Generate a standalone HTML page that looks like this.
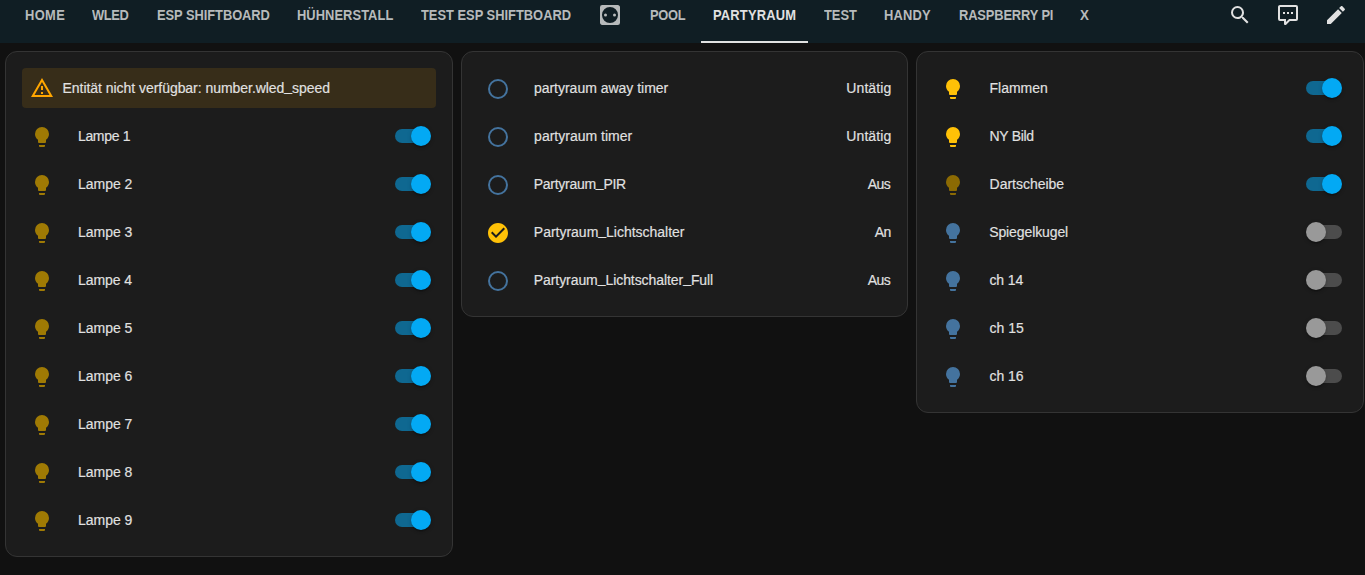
<!DOCTYPE html>
<html lang="de"><head><meta charset="utf-8"><title>Partyraum</title>
<style>
html,body{margin:0;padding:0;background:#111111;}
body{width:1365px;height:575px;position:relative;overflow:hidden;font-family:"Liberation Sans",sans-serif;color:#e1e1e1;-webkit-font-smoothing:antialiased;}
.hdr{position:absolute;left:0;top:0;width:1365px;height:43px;background:#101e24;}
.t{position:absolute;display:block;white-space:nowrap;font-size:14px;line-height:20px;height:20px;}
.b{-webkit-text-stroke:0.15px #e1e1e1;}
.u{position:relative;top:-2px;}
.tab{font-weight:700;font-size:14px;color:#b7babb;transform-origin:0 50%;}
.tab.sel{color:#e1e1e1;}
.bar{position:absolute;left:701px;top:41px;width:107px;height:2px;background:#e1e1e1;}
.card{position:absolute;box-sizing:border-box;background:#1c1c1c;border:1px solid #343434;border-radius:12px;}
.alert{position:absolute;left:22px;top:68px;width:414px;height:40px;border-radius:4px;background:#372d19;}
.ic{position:absolute;display:block;}
.trk{position:absolute;width:32px;height:14px;border-radius:7px;background:#4c4c4c;}
.trk.on{background:#0f6891;}
.thb{position:absolute;width:20px;height:20px;border-radius:50%;background:#999999;box-shadow:0 3px 1px -2px rgba(0,0,0,.2),0 2px 2px 0 rgba(0,0,0,.14),0 1px 5px 0 rgba(0,0,0,.12);}
.thb.on{background:#03a9f4;}
</style></head><body>

<header>
<div class="hdr"></div>
<nav>
<a class="t tab" id="t0" style="left:25.36px;top:5px;letter-spacing:0.398px;transform:scaleX(0.92)">HOME</a>
<a class="t tab" id="t1" style="left:92.43px;top:5px;letter-spacing:-0.443px;transform:scaleX(0.92)">WLED</a>
<a class="t tab" id="t2" style="left:157.23px;top:5px;letter-spacing:-0.054px;transform:scaleX(0.92)">ESP SHIFTBOARD</a>
<a class="t tab" id="t3" style="left:296.87px;top:5px;letter-spacing:0.069px;transform:scaleX(0.92)">HÜHNERSTALL</a>
<a class="t tab" id="t4" style="left:421.15px;top:5px;letter-spacing:0.000px;transform:scaleX(0.92)">TEST ESP SHIFTBOARD</a>
<svg class="ic" style="left:598px;top:3px" width="24" height="24" viewBox="0 0 24 24"><path fill="#b7babb" d="M4.22,2A2.22,2.22 0 0,0 2,4.22V19.78C2,21 3,22 4.22,22H19.78A2.22,2.22 0 0,0 22,19.78V4.22C22,3 21,2 19.78,2H4.22M12,4A8,8 0 0,1 20,12A8,8 0 0,1 12,20A8,8 0 0,1 4,12A8,8 0 0,1 12,4M7.5,10.5A1.5,1.5 0 0,0 6,12A1.5,1.5 0 0,0 7.5,13.5A1.5,1.5 0 0,0 9,12A1.5,1.5 0 0,0 7.5,10.5M16.5,10.5A1.5,1.5 0 0,0 15,12A1.5,1.5 0 0,0 16.5,13.5A1.5,1.5 0 0,0 18,12A1.5,1.5 0 0,0 16.5,10.5Z"/></svg>
<a class="t tab" id="t5" style="left:649.57px;top:5px;letter-spacing:-0.343px;transform:scaleX(0.92)">POOL</a>
<a class="t tab sel" id="t6" style="left:712.69px;top:5px;letter-spacing:0.223px;transform:scaleX(0.92)">PARTYRAUM</a>
<a class="t tab" id="t7" style="left:824.05px;top:5px;letter-spacing:0.000px;transform:scaleX(0.92)">TEST</a>
<a class="t tab" id="t8" style="left:884.05px;top:5px;letter-spacing:0.182px;transform:scaleX(0.92)">HANDY</a>
<a class="t tab" id="t9" style="left:958.62px;top:5px;letter-spacing:-0.146px;transform:scaleX(0.92)">RASPBERRY PI</a>
<a class="t tab" id="t10" style="left:1079.80px;top:5px;letter-spacing:0.000px;transform:scaleX(0.95)">X</a>
<div class="bar"></div>
</nav>
<svg class="ic" style="left:1228px;top:3px" width="24" height="24" viewBox="0 0 24 24"><path fill="#e1e1e1" d="M9.5,3A6.5,6.5 0 0,1 16,9.5C16,11.11 15.41,12.59 14.44,13.73L14.71,14H15.5L20.5,19L19,20.5L14,15.5V14.71L13.73,14.44C12.59,15.41 11.11,16 9.5,16A6.5,6.5 0 0,1 3,9.5A6.5,6.5 0 0,1 9.5,3M9.5,5C7,5 5,7 5,9.5C5,12 7,14 9.5,14C12,14 14,12 14,9.5C14,7 12,5 9.5,5Z"/></svg>
<svg class="ic" style="left:1276px;top:3px" width="24" height="24" viewBox="0 0 24 24"><path fill="#e1e1e1" d="M9,22A1,1 0 0,1 8,21V18H4A2,2 0 0,1 2,16V4C2,2.89 2.9,2 4,2H20A2,2 0 0,1 22,4V16A2,2 0 0,1 20,18H13.9L10.2,21.71C10,21.9 9.75,22 9.5,22V22H9M10,16V19.08L13.08,16H20V4H4V16H10M17,11H15V9H17V11M13,11H11V9H13V11M9,11H7V9H9V11Z"/></svg>
<svg class="ic" style="left:1324px;top:3px" width="24" height="24" viewBox="0 0 24 24"><path fill="#e1e1e1" d="M20.71,7.04C21.1,6.65 21.1,6 20.71,5.63L18.37,3.29C18,2.9 17.35,2.9 16.96,3.29L15.12,5.12L18.87,8.87M3,17.25V21H6.75L17.81,9.93L14.06,6.18L3,17.25Z"/></svg>
</header>
<main>
<section>
<div class="card" style="left:5px;top:51px;width:448px;height:506px"></div>
<div class="alert"></div>
<svg class="ic" style="left:30px;top:76.4px" width="24" height="24" viewBox="0 0 24 24"><path fill="#ffa600" d="M12,2L1,21H23M12,6L19.53,19H4.47M11,10V14H13V10M11,16V18H13V16"/></svg>
<span class="t b" id="t11" style="left:62.52px;top:78px;letter-spacing:-0.042px">Entität nicht verfügbar: number.wled<span class="u">_</span>speed</span>
<div class="row">
<svg class="ic" style="left:30px;top:124.8px" width="24" height="24" viewBox="0 0 24 24"><path fill="#9f7a04" d="M12,2A7,7 0 0,0 5,9C5,11.38 6.19,13.47 8,14.74V17A1,1 0 0,0 9,18H15A1,1 0 0,0 16,17V14.74C17.81,13.47 19,11.38 19,9A7,7 0 0,0 12,2M9,21A1,1 0 0,0 10,22H14A1,1 0 0,0 15,21V20H9V21Z"/></svg>
<span class="t b" id="t12" style="left:77.96px;top:126px;letter-spacing:-0.326px">Lampe 1</span>
<div class="trk on" style="left:395px;top:129px"></div><div class="thb on" style="left:411px;top:126px"></div>
</div>
<div class="row">
<svg class="ic" style="left:30px;top:172.8px" width="24" height="24" viewBox="0 0 24 24"><path fill="#9f7a04" d="M12,2A7,7 0 0,0 5,9C5,11.38 6.19,13.47 8,14.74V17A1,1 0 0,0 9,18H15A1,1 0 0,0 16,17V14.74C17.81,13.47 19,11.38 19,9A7,7 0 0,0 12,2M9,21A1,1 0 0,0 10,22H14A1,1 0 0,0 15,21V20H9V21Z"/></svg>
<span class="t b" id="t13" style="left:78.07px;top:174px;letter-spacing:-0.036px">Lampe 2</span>
<div class="trk on" style="left:395px;top:177px"></div><div class="thb on" style="left:411px;top:174px"></div>
</div>
<div class="row">
<svg class="ic" style="left:30px;top:220.8px" width="24" height="24" viewBox="0 0 24 24"><path fill="#9f7a04" d="M12,2A7,7 0 0,0 5,9C5,11.38 6.19,13.47 8,14.74V17A1,1 0 0,0 9,18H15A1,1 0 0,0 16,17V14.74C17.81,13.47 19,11.38 19,9A7,7 0 0,0 12,2M9,21A1,1 0 0,0 10,22H14A1,1 0 0,0 15,21V20H9V21Z"/></svg>
<span class="t b" id="t14" style="left:78.07px;top:222px;letter-spacing:-0.042px">Lampe 3</span>
<div class="trk on" style="left:395px;top:225px"></div><div class="thb on" style="left:411px;top:222px"></div>
</div>
<div class="row">
<svg class="ic" style="left:30px;top:268.8px" width="24" height="24" viewBox="0 0 24 24"><path fill="#9f7a04" d="M12,2A7,7 0 0,0 5,9C5,11.38 6.19,13.47 8,14.74V17A1,1 0 0,0 9,18H15A1,1 0 0,0 16,17V14.74C17.81,13.47 19,11.38 19,9A7,7 0 0,0 12,2M9,21A1,1 0 0,0 10,22H14A1,1 0 0,0 15,21V20H9V21Z"/></svg>
<span class="t b" id="t15" style="left:78.01px;top:270px;letter-spacing:-0.094px">Lampe 4</span>
<div class="trk on" style="left:395px;top:273px"></div><div class="thb on" style="left:411px;top:270px"></div>
</div>
<div class="row">
<svg class="ic" style="left:30px;top:316.8px" width="24" height="24" viewBox="0 0 24 24"><path fill="#9f7a04" d="M12,2A7,7 0 0,0 5,9C5,11.38 6.19,13.47 8,14.74V17A1,1 0 0,0 9,18H15A1,1 0 0,0 16,17V14.74C17.81,13.47 19,11.38 19,9A7,7 0 0,0 12,2M9,21A1,1 0 0,0 10,22H14A1,1 0 0,0 15,21V20H9V21Z"/></svg>
<span class="t b" id="t16" style="left:78.07px;top:318px;letter-spacing:-0.043px">Lampe 5</span>
<div class="trk on" style="left:395px;top:321px"></div><div class="thb on" style="left:411px;top:318px"></div>
</div>
<div class="row">
<svg class="ic" style="left:30px;top:364.8px" width="24" height="24" viewBox="0 0 24 24"><path fill="#9f7a04" d="M12,2A7,7 0 0,0 5,9C5,11.38 6.19,13.47 8,14.74V17A1,1 0 0,0 9,18H15A1,1 0 0,0 16,17V14.74C17.81,13.47 19,11.38 19,9A7,7 0 0,0 12,2M9,21A1,1 0 0,0 10,22H14A1,1 0 0,0 15,21V20H9V21Z"/></svg>
<span class="t b" id="t17" style="left:78.07px;top:366px;letter-spacing:-0.039px">Lampe 6</span>
<div class="trk on" style="left:395px;top:369px"></div><div class="thb on" style="left:411px;top:366px"></div>
</div>
<div class="row">
<svg class="ic" style="left:30px;top:412.8px" width="24" height="24" viewBox="0 0 24 24"><path fill="#9f7a04" d="M12,2A7,7 0 0,0 5,9C5,11.38 6.19,13.47 8,14.74V17A1,1 0 0,0 9,18H15A1,1 0 0,0 16,17V14.74C17.81,13.47 19,11.38 19,9A7,7 0 0,0 12,2M9,21A1,1 0 0,0 10,22H14A1,1 0 0,0 15,21V20H9V21Z"/></svg>
<span class="t b" id="t18" style="left:78.07px;top:414px;letter-spacing:-0.036px">Lampe 7</span>
<div class="trk on" style="left:395px;top:417px"></div><div class="thb on" style="left:411px;top:414px"></div>
</div>
<div class="row">
<svg class="ic" style="left:30px;top:460.8px" width="24" height="24" viewBox="0 0 24 24"><path fill="#9f7a04" d="M12,2A7,7 0 0,0 5,9C5,11.38 6.19,13.47 8,14.74V17A1,1 0 0,0 9,18H15A1,1 0 0,0 16,17V14.74C17.81,13.47 19,11.38 19,9A7,7 0 0,0 12,2M9,21A1,1 0 0,0 10,22H14A1,1 0 0,0 15,21V20H9V21Z"/></svg>
<span class="t b" id="t19" style="left:78.07px;top:462px;letter-spacing:-0.039px">Lampe 8</span>
<div class="trk on" style="left:395px;top:465px"></div><div class="thb on" style="left:411px;top:462px"></div>
</div>
<div class="row">
<svg class="ic" style="left:30px;top:508.8px" width="24" height="24" viewBox="0 0 24 24"><path fill="#9f7a04" d="M12,2A7,7 0 0,0 5,9C5,11.38 6.19,13.47 8,14.74V17A1,1 0 0,0 9,18H15A1,1 0 0,0 16,17V14.74C17.81,13.47 19,11.38 19,9A7,7 0 0,0 12,2M9,21A1,1 0 0,0 10,22H14A1,1 0 0,0 15,21V20H9V21Z"/></svg>
<span class="t b" id="t20" style="left:78.07px;top:510px;letter-spacing:-0.038px">Lampe 9</span>
<div class="trk on" style="left:395px;top:513px"></div><div class="thb on" style="left:411px;top:510px"></div>
</div>
</section>
<section>
<div class="card" style="left:461px;top:51px;width:447px;height:266px"></div>
<div class="row">
<svg class="ic" style="left:486px;top:76.5px" width="24" height="24" viewBox="0 0 24 24"><path fill="#44739e" d="M12,20A8,8 0 0,1 4,12A8,8 0 0,1 12,4A8,8 0 0,1 20,12A8,8 0 0,1 12,20M12,2A10,10 0 0,0 2,12A10,10 0 0,0 12,22A10,10 0 0,0 22,12A10,10 0 0,0 12,2Z"/></svg>
<span class="t b" id="t21" style="left:533.93px;top:78px;letter-spacing:-0.014px">partyraum away timer</span>
<span class="t b" id="t22" style="left:846.36px;top:78px;letter-spacing:0.074px">Untätig</span>
</div>
<div class="row">
<svg class="ic" style="left:486px;top:124.5px" width="24" height="24" viewBox="0 0 24 24"><path fill="#44739e" d="M12,20A8,8 0 0,1 4,12A8,8 0 0,1 12,4A8,8 0 0,1 20,12A8,8 0 0,1 12,20M12,2A10,10 0 0,0 2,12A10,10 0 0,0 12,22A10,10 0 0,0 22,12A10,10 0 0,0 12,2Z"/></svg>
<span class="t b" id="t23" style="left:534.10px;top:126px;letter-spacing:0.000px">partyraum timer</span>
<span class="t b" id="t24" style="left:846.36px;top:126px;letter-spacing:0.074px">Untätig</span>
</div>
<div class="row">
<svg class="ic" style="left:486px;top:172.5px" width="24" height="24" viewBox="0 0 24 24"><path fill="#44739e" d="M12,20A8,8 0 0,1 4,12A8,8 0 0,1 12,4A8,8 0 0,1 20,12A8,8 0 0,1 12,20M12,2A10,10 0 0,0 2,12A10,10 0 0,0 12,22A10,10 0 0,0 22,12A10,10 0 0,0 12,2Z"/></svg>
<span class="t b" id="t25" style="left:533.82px;top:174px;letter-spacing:-0.282px">Partyraum<span class="u">_</span>PIR</span>
<span class="t b" id="t26" style="left:867.78px;top:174px;letter-spacing:-0.516px">Aus</span>
</div>
<div class="row">
<svg class="ic" style="left:486px;top:220.5px" width="24" height="24" viewBox="0 0 24 24"><path fill="#ffc107" d="M12 2C6.5 2 2 6.5 2 12S6.5 22 12 22 22 17.5 22 12 17.5 2 12 2M10 17L5 12L6.41 10.59L10 14.17L17.59 6.58L19 8L10 17Z"/></svg>
<span class="t b" id="t27" style="left:533.82px;top:222px;letter-spacing:-0.012px">Partyraum<span class="u">_</span>Lichtschalter</span>
<span class="t b" id="t28" style="left:874.87px;top:222px;letter-spacing:-0.773px">An</span>
</div>
<div class="row">
<svg class="ic" style="left:486px;top:268.5px" width="24" height="24" viewBox="0 0 24 24"><path fill="#44739e" d="M12,20A8,8 0 0,1 4,12A8,8 0 0,1 12,4A8,8 0 0,1 20,12A8,8 0 0,1 12,20M12,2A10,10 0 0,0 2,12A10,10 0 0,0 12,22A10,10 0 0,0 22,12A10,10 0 0,0 12,2Z"/></svg>
<span class="t b" id="t29" style="left:533.76px;top:270px;letter-spacing:-0.068px">Partyraum<span class="u">_</span>Lichtschalter<span class="u">_</span>Full</span>
<span class="t b" id="t30" style="left:867.78px;top:270px;letter-spacing:-0.516px">Aus</span>
</div>
</section>
<section>
<div class="card" style="left:916px;top:51px;width:448px;height:362px"></div>
<div class="row">
<svg class="ic" style="left:941px;top:76.8px" width="24" height="24" viewBox="0 0 24 24"><path fill="#ffc107" d="M12,2A7,7 0 0,0 5,9C5,11.38 6.19,13.47 8,14.74V17A1,1 0 0,0 9,18H15A1,1 0 0,0 16,17V14.74C17.81,13.47 19,11.38 19,9A7,7 0 0,0 12,2M9,21A1,1 0 0,0 10,22H14A1,1 0 0,0 15,21V20H9V21Z"/></svg>
<span class="t b" id="t31" style="left:989.59px;top:78px;letter-spacing:-0.020px">Flammen</span>
<div class="trk on" style="left:1306px;top:81px"></div><div class="thb on" style="left:1322px;top:78px"></div>
</div>
<div class="row">
<svg class="ic" style="left:941px;top:124.8px" width="24" height="24" viewBox="0 0 24 24"><path fill="#ffc107" d="M12,2A7,7 0 0,0 5,9C5,11.38 6.19,13.47 8,14.74V17A1,1 0 0,0 9,18H15A1,1 0 0,0 16,17V14.74C17.81,13.47 19,11.38 19,9A7,7 0 0,0 12,2M9,21A1,1 0 0,0 10,22H14A1,1 0 0,0 15,21V20H9V21Z"/></svg>
<span class="t b" id="t32" style="left:989.55px;top:126px;letter-spacing:-0.304px">NY Bild</span>
<div class="trk on" style="left:1306px;top:129px"></div><div class="thb on" style="left:1322px;top:126px"></div>
</div>
<div class="row">
<svg class="ic" style="left:941px;top:172.8px" width="24" height="24" viewBox="0 0 24 24"><path fill="#8b6a03" d="M12,2A7,7 0 0,0 5,9C5,11.38 6.19,13.47 8,14.74V17A1,1 0 0,0 9,18H15A1,1 0 0,0 16,17V14.74C17.81,13.47 19,11.38 19,9A7,7 0 0,0 12,2M9,21A1,1 0 0,0 10,22H14A1,1 0 0,0 15,21V20H9V21Z"/></svg>
<span class="t b" id="t33" style="left:989.59px;top:174px;letter-spacing:-0.023px">Dartscheibe</span>
<div class="trk on" style="left:1306px;top:177px"></div><div class="thb on" style="left:1322px;top:174px"></div>
</div>
<div class="row">
<svg class="ic" style="left:941px;top:220.8px" width="24" height="24" viewBox="0 0 24 24"><path fill="#44739e" d="M12,2A7,7 0 0,0 5,9C5,11.38 6.19,13.47 8,14.74V17A1,1 0 0,0 9,18H15A1,1 0 0,0 16,17V14.74C17.81,13.47 19,11.38 19,9A7,7 0 0,0 12,2M9,21A1,1 0 0,0 10,22H14A1,1 0 0,0 15,21V20H9V21Z"/></svg>
<span class="t b" id="t34" style="left:989.16px;top:222px;letter-spacing:-0.102px">Spiegelkugel</span>
<div class="trk" style="left:1310px;top:225px"></div><div class="thb" style="left:1306px;top:222px"></div>
</div>
<div class="row">
<svg class="ic" style="left:941px;top:268.8px" width="24" height="24" viewBox="0 0 24 24"><path fill="#44739e" d="M12,2A7,7 0 0,0 5,9C5,11.38 6.19,13.47 8,14.74V17A1,1 0 0,0 9,18H15A1,1 0 0,0 16,17V14.74C17.81,13.47 19,11.38 19,9A7,7 0 0,0 12,2M9,21A1,1 0 0,0 10,22H14A1,1 0 0,0 15,21V20H9V21Z"/></svg>
<span class="t b" id="t35" style="left:989.47px;top:270px;letter-spacing:-0.117px">ch 14</span>
<div class="trk" style="left:1310px;top:273px"></div><div class="thb" style="left:1306px;top:270px"></div>
</div>
<div class="row">
<svg class="ic" style="left:941px;top:316.8px" width="24" height="24" viewBox="0 0 24 24"><path fill="#44739e" d="M12,2A7,7 0 0,0 5,9C5,11.38 6.19,13.47 8,14.74V17A1,1 0 0,0 9,18H15A1,1 0 0,0 16,17V14.74C17.81,13.47 19,11.38 19,9A7,7 0 0,0 12,2M9,21A1,1 0 0,0 10,22H14A1,1 0 0,0 15,21V20H9V21Z"/></svg>
<span class="t b" id="t36" style="left:989.50px;top:318px;letter-spacing:0.000px">ch 15</span>
<div class="trk" style="left:1310px;top:321px"></div><div class="thb" style="left:1306px;top:318px"></div>
</div>
<div class="row">
<svg class="ic" style="left:941px;top:364.8px" width="24" height="24" viewBox="0 0 24 24"><path fill="#44739e" d="M12,2A7,7 0 0,0 5,9C5,11.38 6.19,13.47 8,14.74V17A1,1 0 0,0 9,18H15A1,1 0 0,0 16,17V14.74C17.81,13.47 19,11.38 19,9A7,7 0 0,0 12,2M9,21A1,1 0 0,0 10,22H14A1,1 0 0,0 15,21V20H9V21Z"/></svg>
<span class="t b" id="t37" style="left:989.48px;top:366px;letter-spacing:-0.038px">ch 16</span>
<div class="trk" style="left:1310px;top:369px"></div><div class="thb" style="left:1306px;top:366px"></div>
</div>
</section>
</main>
</body></html>
